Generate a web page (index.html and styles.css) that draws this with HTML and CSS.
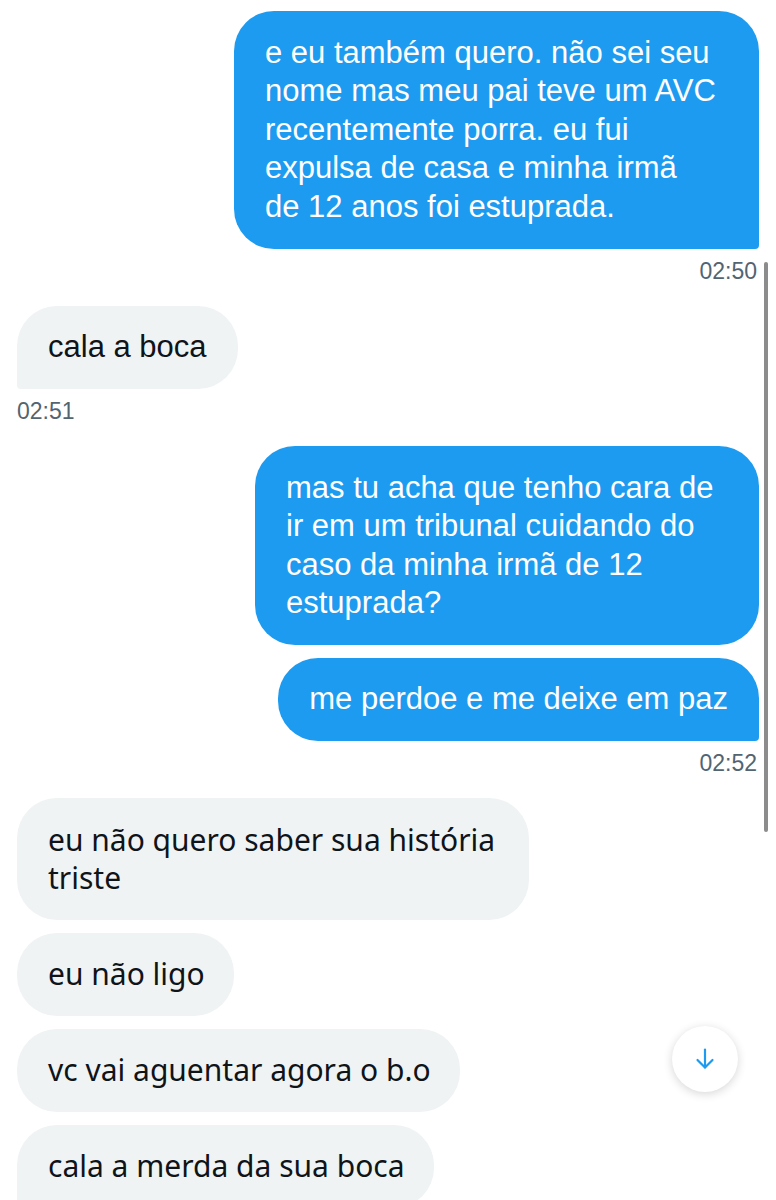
FILE: index.html
```html
<!DOCTYPE html>
<html lang="pt">
<head>
    <meta charset="UTF-8">
    <meta name="viewport" content="width=device-width, initial-scale=1.0">
    <title>Mensagens</title>
    <link rel="stylesheet" href="styles.css">
</head>
<body>
    <main class="chat">
        <div class="group sent">
            <div class="bubbles">
                <div class="bubble last wide-1">e eu também quero. não sei seu<br>nome mas meu pai teve um AVC<br>recentemente porra. eu fui<br>expulsa de casa e minha irmã<br>de 12 anos foi estuprada.</div>
            </div>
            <div class="time">02:50</div>
        </div>

        <div class="group received">
            <div class="bubbles">
                <div class="bubble last">cala a boca</div>
            </div>
            <div class="time">02:51</div>
        </div>

        <div class="group sent">
            <div class="bubbles">
                <div class="bubble wide-2">mas tu acha que tenho cara de<br>ir em um tribunal cuidando do<br>caso da minha irmã de 12<br>estuprada?</div>
                <div class="bubble last">me perdoe e me deixe em paz</div>
            </div>
            <div class="time">02:52</div>
        </div>

        <div class="group received other-font">
            <div class="bubbles">
                <div class="bubble wide-3">eu não quero saber sua história<br>triste</div>
                <div class="bubble">eu não ligo</div>
                <div class="bubble">vc vai aguentar agora o b.o</div>
                <div class="bubble last">cala a merda da sua boca</div>
            </div>
        </div>
    </main>

    <div class="scrollbar"></div>

    <button class="scroll-down" aria-label="Ir para o fim">
        <svg width="24" height="24" viewBox="0 0 24 24" fill="none" stroke="#1d9bf0" stroke-width="2.2" stroke-linecap="round" stroke-linejoin="round">
            <path d="M12 2.5v18"/>
            <path d="M4.5 13 12 20.5l7.5-7.5"/>
        </svg>
    </button>
</body>
</html>
```

FILE: styles.css
```css
body {
    margin: 0;
    background-color: #ffffff;
    font-family: 'Liberation Sans', Arial, sans-serif;
    color: #0f1419;
}

.chat {
    padding: 11px 17px 0;
}

.group {
    display: flex;
    flex-direction: column;
}

.group.sent {
    align-items: flex-end;
}

.group.received {
    align-items: flex-start;
}

.bubbles {
    display: flex;
    flex-direction: column;
    gap: 12.5px;
}

.sent .bubbles {
    align-items: flex-end;
}

.received .bubbles {
    align-items: flex-start;
}

.bubble {
    box-sizing: border-box;
    padding: 22.5px 31px;
    border-radius: 40px;
    font-size: 31px;
    line-height: 38.5px;
    white-space: nowrap;
}

.sent .bubble {
    background-color: #1d9bf0;
    color: #ffffff;
}

.received .bubble {
    background-color: #eff3f4;
    color: #0f1419;
}

.sent .bubble.last {
    border-bottom-right-radius: 4px;
}

.received .bubble.last {
    border-bottom-left-radius: 4px;
}

.other-font .bubble {
    font-family: 'Noto Sans', 'Open Sans', sans-serif;
    font-size: 30px;
    padding-right: 29px;
}

.wide-1 {
    width: 525px;
}

.wide-2 {
    width: 504px;
}

.wide-3 {
    width: 512px;
}

.time {
    margin: 8px 2px 21px 0;
    font-size: 23px;
    line-height: 28px;
    color: #536471;
}

.received .time {
    margin-left: 0;
}

.scrollbar {
    position: absolute;
    left: 764px;
    top: 262px;
    width: 4px;
    height: 570px;
    border-radius: 2px;
    background-color: #8c8c8c;
}

.scroll-down {
    position: absolute;
    left: 672px;
    top: 1026px;
    width: 66px;
    height: 66px;
    padding: 0;
    border: none;
    border-radius: 50%;
    background-color: #ffffff;
    box-shadow: 0 2px 10px rgba(0, 0, 0, 0.16);
    display: flex;
    align-items: center;
    justify-content: center;
}
```
